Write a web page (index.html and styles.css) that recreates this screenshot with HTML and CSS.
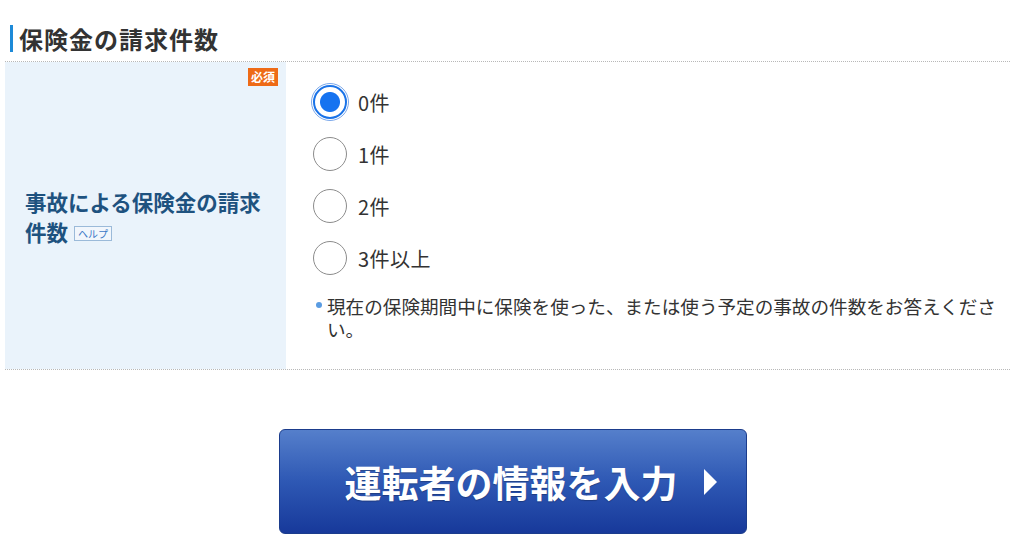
FILE: index.html
```html
<!DOCTYPE html>
<html lang="ja">
<head>
<meta charset="utf-8">
<link rel="stylesheet" href="styles.css">
</head>
<body>
<section class="block">
  <h2 class="heading">保険金の請求件数</h2>
  <div class="row">
    <div class="label-cell">
      <span class="required">必須</span>
      <p class="label">事故による保険金の請求<br>件数<span class="help">ヘルプ</span></p>
    </div>
    <div class="field-cell">
      <label class="radio focus"><input type="radio" name="n" checked><span class="txt">0件</span></label>
      <label class="radio"><input type="radio" name="n"><span class="txt">1件</span></label>
      <label class="radio"><input type="radio" name="n"><span class="txt">2件</span></label>
      <label class="radio"><input type="radio" name="n"><span class="txt">3件以上</span></label>
      <p class="note">現在の保険期間中に保険を使った、または使う予定の事故の件数をお答えください。</p>
    </div>
  </div>
  <div class="actions">
    <button class="next">運転者の情報を入力<span class="arrow"></span></button>
  </div>
</section>
</body>
</html>
```
FILE: styles.css
```css
* { box-sizing: border-box; }
html, body { margin: 0; padding: 0; background: #fff; }
body { font-family: "Noto Sans CJK JP", "Noto Sans", sans-serif; color: #333; }
.block { padding: 25px 14px 0 5px; width: 1024px; }
.heading {
  margin: 0 0 9px 5px;
  padding-left: 6px;
  border-left: 3px solid #1d8ad8;
  font-size: 24px;
  line-height: 27px;
  font-weight: 700;
  color: #333;
  letter-spacing: 1px;
}
.row {
  display: flex;
  border-top: 1px dotted #b8b8b8;
  border-bottom: 1px dotted #b8b8b8;
  min-height: 309px;
}
.label-cell {
  position: relative;
  width: 281px;
  flex: none;
  background: #eaf3fb;
  display: flex;
  align-items: center;
  padding: 0 20px;
}
.required {
  position: absolute;
  top: 6px;
  right: 8px;
  background: #ee6a16;
  color: #fff;
  font-size: 12px;
  font-weight: 700;
  line-height: 18px;
  padding: 0 3px;
}
.label {
  margin: 2px 0 0 0;
  color: #1e527f;
  font-size: 21.5px;
  font-weight: 700;
  line-height: 30px;
}
.help {
  display: inline-block;
  vertical-align: 3px;
  margin-left: 6px;
  border: 1px solid #9bbad9;
  background: #f1f6fc;
  color: #3b78c6;
  font-size: 10px;
  font-weight: 400;
  line-height: 13px;
  padding: 0 3px;
}
.field-cell {
  flex: 1;
  padding: 14px 0 22px 27px;
}
.radio {
  display: flex;
  align-items: center;
  height: 52px;
  cursor: pointer;
}
.radio input {
  appearance: none;
  -webkit-appearance: none;
  margin: 0;
  width: 34px;
  height: 34px;
  border-radius: 50%;
  border: 1.5px solid #8c8c8c;
  background: #fff;
  flex: none;
}
.radio input:checked {
  border: 2px solid #1a73e8;
  background: radial-gradient(circle, #1673f0 0 9.5px, #fff 10.5px);
}
.radio.focus input { outline: 1px solid #7aa7ea; outline-offset: 1px; }
.txt { margin-left: 11px; font-size: 20px; color: #333; letter-spacing: 0.5px; }
.note {
  position: relative;
  margin: 10px 0 0 0;
  padding-left: 14px;
  font-size: 18.6px;
  line-height: 23px;
  color: #333;
}
.note::before {
  content: "";
  position: absolute;
  left: 3px;
  top: 8px;
  width: 6px;
  height: 6px;
  border-radius: 50%;
  background: #5a9ce2;
}
.actions { display: flex; justify-content: center; padding: 59px 0 20px 10px; }
.next {
  width: 468px;
  height: 105px;
  border: 1px solid #1b3c8c;
  border-radius: 6px;
  background: linear-gradient(#557fcb, #2e58b4 50%, #17399a);
  color: #fff;
  font-family: inherit;
  font-size: 37px;
  font-weight: 700;
  display: flex;
  align-items: center;
  justify-content: center;
  padding-left: 42px;
  text-shadow: 0 1px 1px rgba(0,0,0,0.25);
  cursor: pointer;
}
.arrow {
  width: 0;
  height: 0;
  margin-left: 26px;
  border-top: 13px solid transparent;
  border-bottom: 13px solid transparent;
  border-left: 13px solid #fff;
}
```
